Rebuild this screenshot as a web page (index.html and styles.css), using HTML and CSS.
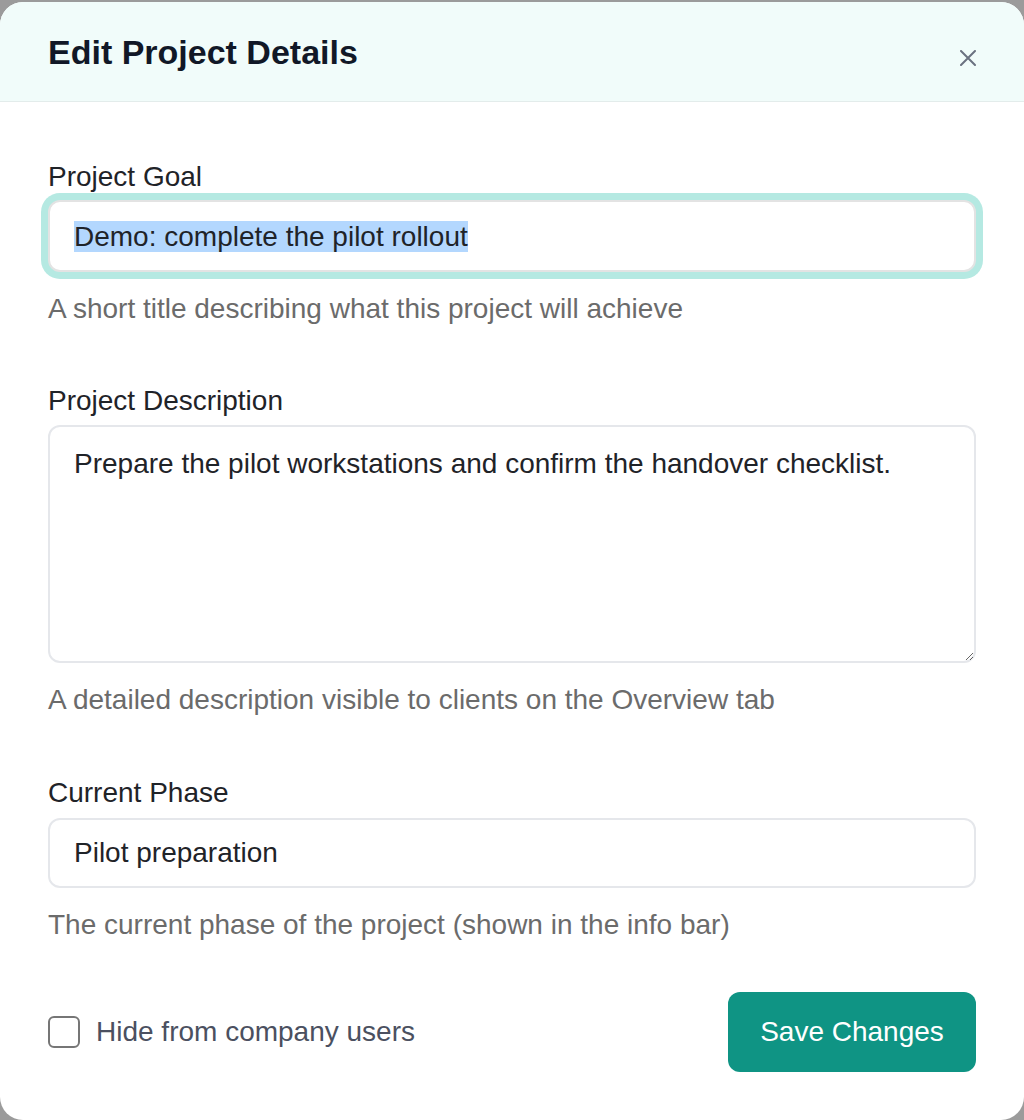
FILE: index.html
```html
<!DOCTYPE html>
<html lang="en">
<head>
<meta charset="utf-8">
<title>Edit Project Details</title>
<link rel="stylesheet" href="styles.css">
</head>
<body>
<div class="modal">
  <div class="modal-header">
    <h1 class="modal-title">Edit Project Details</h1>
    <button class="close-btn" aria-label="Close">
      <svg width="16" height="16" viewBox="0 0 16 16"><path d="M1 1L15 15M15 1L1 15" stroke="#6b7280" stroke-width="2" stroke-linecap="round"/></svg>
    </button>
  </div>
  <div class="modal-body">
    <div class="field">
      <label class="field-label">Project Goal</label>
      <div class="text-input focused" role="textbox"><span class="selected">Demo: complete the pilot rollout</span></div>
      <p class="field-help">A short title describing what this project will achieve</p>
    </div>
    <div class="field field-desc">
      <label class="field-label">Project Description</label>
      <textarea class="text-area">Prepare the pilot workstations and confirm the handover checklist.</textarea>
      <p class="field-help">A detailed description visible to clients on the Overview tab</p>
    </div>
    <div class="field field-phase">
      <label class="field-label">Current Phase</label>
      <div class="text-input" role="textbox">Pilot preparation</div>
      <p class="field-help">The current phase of the project (shown in the info bar)</p>
    </div>
    <div class="modal-footer">
      <label class="check">
        <span class="check-box"></span>
        <span class="check-label">Hide from company users</span>
      </label>
      <button class="save-btn">Save Changes</button>
    </div>
  </div>
</div>
</body>
</html>
```

FILE: styles.css
```css
* { box-sizing: border-box; }
html, body {
  margin: 0;
  padding: 0;
  height: 1120px;
  overflow: hidden;
}
body {
  background: #9b9b9b;
  font-family: "Liberation Sans", Arial, sans-serif;
  padding-top: 2px;
}
.modal {
  width: 1024px;
  height: 1118px;
  background: #ffffff;
  border-radius: 23px;
  overflow: hidden;
  display: flex;
  flex-direction: column;
}
.modal-header {
  position: relative;
  height: 100px;
  background: #f1fcfa;
  border-bottom: 1px solid #e3eceb;
  display: flex;
  align-items: center;
  padding: 0 48px;
  flex-shrink: 0;
}
.modal-title {
  margin: 0;
  font-size: 34px;
  font-weight: 700;
  color: #111827;
  line-height: 40px;
}
.close-btn {
  position: absolute;
  right: 48px;
  top: 48px;
  width: 16px;
  height: 16px;
  padding: 0;
  border: 0;
  background: none;
  display: block;
}
.close-btn svg { display: block; }
.modal-body {
  padding: 57px 48px 48px;
  display: flex;
  flex-direction: column;
  flex: 1;
  min-height: 0;
}
.field {
  display: flex;
  flex-direction: column;
  margin-bottom: 56px;
  flex-shrink: 0;
}
.field-desc { margin-bottom: 57px; }
.field-phase { margin-bottom: 40px; }
.field-label {
  font-size: 28px;
  line-height: 36px;
  color: #1f2328;
  margin-bottom: 5px;
}
.field-desc .field-label { margin-bottom: 6px; }
.field-phase .field-label { margin-bottom: 7px; }
.text-input {
  height: 72px;
  border: 2px solid #e5e7eb;
  border-radius: 12px;
  padding: 0 24px;
  display: flex;
  align-items: center;
  font-size: 28px;
  color: #1f2328;
  background: #fff;
}
.text-input.focused {
  box-shadow: 0 0 0 7px #b5e9e2;
  border-color: #e3e3e3;
}
.field-phase .text-input { height: 70px; }
.selected {
  background: #b3d7fe;
  line-height: 31px;
}
.text-area {
  height: 238px;
  border: 2px solid #e5e7eb;
  border-radius: 12px;
  padding: 19px 24px;
  font-family: "Liberation Sans", Arial, sans-serif;
  font-size: 28px;
  line-height: 36px;
  color: #1f2328;
  resize: vertical;
  outline: none;
  display: block;
  width: 100%;
}
.field-help {
  margin: 19px 0 0;
  font-size: 28px;
  line-height: 36px;
  color: #6b6b6b;
}
.modal-footer {
  margin-top: auto;
  display: flex;
  align-items: center;
  justify-content: space-between;
}
.check {
  display: flex;
  align-items: center;
  gap: 16px;
}
.check-box {
  width: 32px;
  height: 32px;
  border: 2px solid #767676;
  border-radius: 6px;
  background: #fff;
  display: block;
}
.check-label {
  font-size: 28px;
  color: #4b5060;
}
.save-btn {
  width: 248px;
  height: 80px;
  border: 0;
  border-radius: 12px;
  background: #0f9484;
  color: #ffffff;
  font-family: "Liberation Sans", Arial, sans-serif;
  font-size: 28px;
}
```
